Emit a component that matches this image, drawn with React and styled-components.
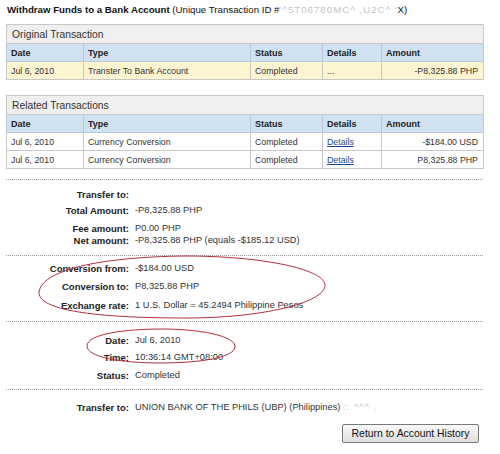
import React from "react";
import styled, { createGlobalStyle } from "styled-components";

const Global = createGlobalStyle`
  body {
    margin: 0;
    background: #fff;
    font-family: "Liberation Sans", Arial, sans-serif;
    font-size: 9px;
    color: #333;
  }
`;

const Page = styled.div`
  position: relative;
  width: 477px;
  padding: 4px 0 0 6px;
`;

const Heading = styled.div`
  font-size: 9.7px;
  line-height: 12px;
  color: #111;
  margin-left: 1px;
  white-space: nowrap;
`;

const Hidden = styled.span`
  color: #c4c4c4;
  letter-spacing: 1px;
`;

const Table = styled.table`
  width: 477px;
  border-collapse: collapse;
  margin-top: ${(p) => p.$top}px;
  border: 1px solid #c8c8c8;
  table-layout: fixed;
`;

const Caption = styled.th`
  background: #efefef;
  text-align: left;
  font-weight: normal;
  font-size: 10.3px;
  height: 18px;
  padding: 0 5px;
  border: 1px solid #c8c8c8;
  color: #333;
`;

const Head = styled.th`
  background: #d0e1f2;
  text-align: left;
  font-weight: bold;
  font-size: 9px;
  height: 17px;
  padding: 0 4px;
  border: 1px solid #b9c9d9;
  color: #222;
`;

const Cell = styled.td`
  background: ${(p) => (p.$hl ? "#fdf5d2" : "#fff")};
  height: 17px;
  padding: 0 ${(p) => (p.$right ? 5 : 4)}px 0 4px;
  border: 1px solid #c8c8c8;
  text-align: ${(p) => (p.$right ? "right" : "left")};
  white-space: nowrap;
  font-size: 8.8px;
  color: #333;
`;

const Link = styled.a`
  color: #1a4a8a;
  text-decoration: underline;
`;

const Divider = styled.div`
  border-top: 1px dotted #9a9a9a;
  margin-top: ${(p) => p.$top}px;
`;

const Fields = styled.div`
  display: grid;
  grid-template-columns: 123px auto;
  column-gap: 6px;
  margin-top: ${(p) => p.$top}px;
`;

const Label = styled.div`
  text-align: right;
  font-weight: bold;
  font-size: 9.5px;
  color: #222;
  line-height: 13px;
  margin-top: ${(p) => p.$gap || 0}px;
  white-space: nowrap;
`;

const Value = styled.div`
  font-size: 9.3px;
  line-height: 13px;
  margin-top: ${(p) => p.$gap || 0}px;
  white-space: nowrap;
`;

const Footer = styled.div`
  display: flex;
  justify-content: flex-end;
  margin-top: 10px;
  padding-right: 4px;
`;

const Button = styled.button`
  font-family: "Liberation Sans", Arial, sans-serif;
  font-size: 10.4px;
  color: #111;
  width: 137px;
  height: 19px;
  padding: 0;
  border: 1px solid #7a7a7a;
  border-radius: 2px;
  background: linear-gradient(#fafafa, #dedede);
`;

const Marks = styled.svg`
  position: absolute;
  left: 0;
  top: 0;
  pointer-events: none;
`;

function Row({ label, value, gap }) {
  return (
    <>
      <Label $gap={gap}>{label}</Label>
      <Value $gap={gap}>{value}</Value>
    </>
  );
}

const widths = [77, 167, 72, 59, 102];

function Cols() {
  return (
    <colgroup>
      {widths.map((w, i) => (
        <col key={i} style={{ width: w }} />
      ))}
    </colgroup>
  );
}

function HeadRow() {
  return (
    <tr>
      <Head>Date</Head>
      <Head>Type</Head>
      <Head>Status</Head>
      <Head>Details</Head>
      <Head>Amount</Head>
    </tr>
  );
}

export default function App() {
  return (
    <Page>
      <Global />
      <Heading>
        <b>Withdraw Funds to a Bank Account</b> (Unique Transaction ID #
        <Hidden>'^5T06780MC^ ,U2C^ '</Hidden>X)
      </Heading>

      <Table $top={8}>
        <Cols />
        <thead>
          <tr>
            <Caption colSpan={5}>Original Transaction</Caption>
          </tr>
          <HeadRow />
        </thead>
        <tbody>
          <tr>
            <Cell $hl>Jul 6, 2010</Cell>
            <Cell $hl>Transter To Bank Account</Cell>
            <Cell $hl>Completed</Cell>
            <Cell $hl>...</Cell>
            <Cell $hl $right>-P8,325.88 PHP</Cell>
          </tr>
        </tbody>
      </Table>

      <Table $top={15}>
        <Cols />
        <thead>
          <tr>
            <Caption colSpan={5}>Related Transactions</Caption>
          </tr>
          <HeadRow />
        </thead>
        <tbody>
          <tr>
            <Cell>Jul 6, 2010</Cell>
            <Cell>Currency Conversion</Cell>
            <Cell>Completed</Cell>
            <Cell>
              <Link>Details</Link>
            </Cell>
            <Cell $right>-$184.00 USD</Cell>
          </tr>
          <tr>
            <Cell>Jul 6, 2010</Cell>
            <Cell>Currency Conversion</Cell>
            <Cell>Completed</Cell>
            <Cell>
              <Link>Details</Link>
            </Cell>
            <Cell $right>P8,325.88 PHP</Cell>
          </tr>
        </tbody>
      </Table>

      <Divider $top={10} />
      <Fields $top={8}>
        <Row label="Transfer to:" value="" />
        <Row label="Total Amount:" value="-P8,325.88 PHP" gap={3} />
        <Row label="Fee amount:" value="P0.00 PHP" gap={5} />
        <Row label="Net amount:" value="-P8,325.88 PHP (equals -$185.12 USD)" gap={-1} />
      </Fields>

      <Divider $top={8} />
      <Fields $top={6}>
        <Row label="Conversion from:" value="-$184.00 USD" />
        <Row label="Conversion to:" value="P8,325.88 PHP" gap={5} />
        <Row label="Exchange rate:" value="1 U.S. Dollar = 45.2494 Philippine Pesos" gap={6} />
      </Fields>

      <Divider $top={9} />
      <Fields $top={12}>
        <Row label="Date:" value="Jul 6, 2010" />
        <Row label="Time:" value="10:36:14 GMT+08:00" gap={4} />
        <Row label="Status:" value="Completed" gap={5} />
      </Fields>

      <Divider $top={7} />
      <Fields $top={11}>
        <Row
          label="Transfer to:"
          value={
            <>
              UNION BANK OF THE PHILS (UBP) (Philippines) <Hidden>:: ^^^ .</Hidden>
            </>
          }
        />
      </Fields>

      <Footer>
        <Button>Return to Account History</Button>
      </Footer>

      <Marks width="500" height="454" viewBox="0 0 500 454">
        <path
          d="M 39 293 C 40 270, 100 257, 185 256 C 265 256, 327 270, 325 286 C 323 303, 262 318, 186 318 C 106 318, 40 312, 39 293 Z"
          fill="none"
          stroke="#b03040"
          strokeWidth="1"
        />
        <path
          d="M 87 346 C 87 334, 125 329, 162 329 C 200 329, 236 336, 235 347 C 234 358, 198 363, 160 363 C 120 363, 87 357, 87 346 Z"
          fill="none"
          stroke="#b03040"
          strokeWidth="1"
        />
      </Marks>
    </Page>
  );
}
